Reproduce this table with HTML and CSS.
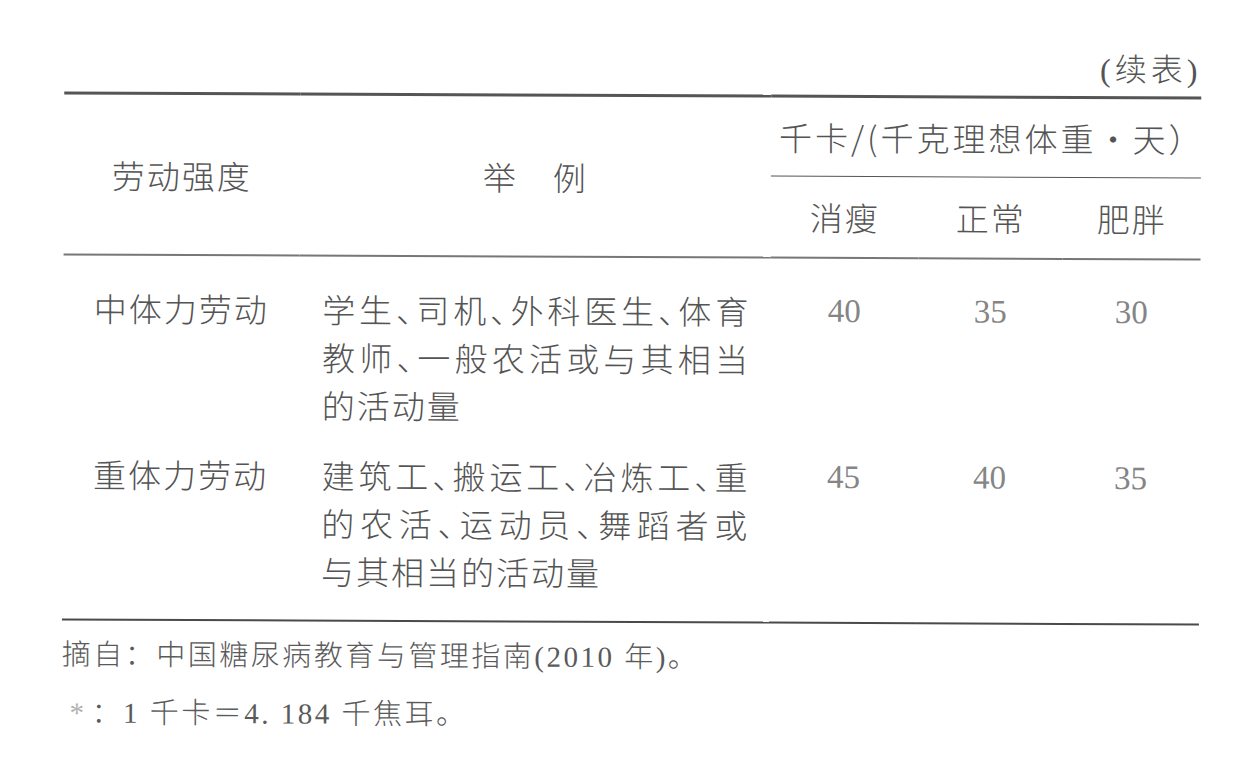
FILE: index.html
```html
<!DOCTYPE html>
<html lang="zh-CN">
<head>
<meta charset="utf-8">
<title>续表</title>
<link rel="stylesheet" href="styles.css">
</head>
<body>
<div class="page">
  <p class="cont">(续表)</p>
  <table class="tbl">
    <colgroup>
      <col class="c1"><col class="c2"><col class="c3"><col class="c4"><col class="c5">
    </colgroup>
    <thead>
      <tr>
        <th rowspan="2" class="hd-span">劳动强度</th>
        <th rowspan="2" class="hd-span">举　例</th>
        <th colspan="3" class="hd-group">千卡/(千克理想体重・天）</th>
      </tr>
      <tr>
        <th class="hd-sub">消瘦</th>
        <th class="hd-sub">正常</th>
        <th class="hd-sub">肥胖</th>
      </tr>
    </thead>
    <tbody>
      <tr class="r1">
        <td class="name">中体力劳动</td>
        <td class="ex"><span class="ln">学生、司机、外科医生、体育</span><span class="ln">教师、一般农活或与其相当</span><span class="ln end">的活动量</span></td>
        <td class="num">40</td>
        <td class="num">35</td>
        <td class="num">30</td>
      </tr>
      <tr class="r2">
        <td class="name">重体力劳动</td>
        <td class="ex"><span class="ln">建筑工、搬运工、冶炼工、重</span><span class="ln">的农活、运动员、舞蹈者或</span><span class="ln end">与其相当的活动量</span></td>
        <td class="num">45</td>
        <td class="num">40</td>
        <td class="num">35</td>
      </tr>
    </tbody>
  </table>
  <p class="note note-src">摘自：中国糖尿病教育与管理指南(2010 年)。</p>
  <p class="note note-unit"><span class="star">*</span>：1 千卡＝4. 184 千焦耳。</p>
</div>
</body>
</html>
```

FILE: styles.css
```css
html, body {
  margin: 0;
  background: #ffffff;
}
body {
  color: #545454;
  font-family: "Noto Sans CJK SC", sans-serif;
}
.page {
  width: 1137px;
  padding: 48px 0 0 63px;
  transform: rotate(0.25deg);
  transform-origin: 631px 380px;
}
.cont {
  margin: 0 0 6px;
  line-height: 40px;
  text-align: right;
  font-family: "Liberation Serif", "Noto Sans CJK SC", serif;
  font-size: 32px;
  font-weight: 300;
  letter-spacing: 4px;
}
.tbl {
  width: 1137px;
  border-collapse: separate;
  border-spacing: 0;
  table-layout: fixed;
}
.c1 { width: 236px; }
.c2 { width: 471px; }
.c3 { width: 148px; }
.c4 { width: 144px; }
.c5 { width: 138px; }
th {
  padding: 0;
  font-size: 33px;
  font-weight: 300;
  letter-spacing: 2px;
  text-align: center;
}
.hd-span {
  border-top: 3px solid #555;
  border-bottom: 2px solid #777;
  vertical-align: middle;
}
.hd-group {
  border-top: 3px solid #555;
  border-bottom: 1px solid #555;
  line-height: 78px;
  letter-spacing: 3px;
  padding-left: 8px;
}
.hd-sub {
  line-height: 80px;
  border-bottom: 2px solid #777;
}
td {
  padding: 0;
  vertical-align: top;
  line-height: 48px;
  font-size: 33px;
  font-weight: 300;
  letter-spacing: 2px;
}
.r1 td {
  padding-top: 28px;
}
.r2 td {
  padding-top: 22px;
  padding-bottom: 25px;
  border-bottom: 2px solid #4a4a4a;
}
.name {
  text-align: center;
}
.ex {
  padding-left: 23px;
}
.ln {
  display: block;
  width: 428px;
  text-align: justify;
  text-align-last: justify;
  font-feature-settings: "halt";
}
.ln.end {
  text-align-last: left;
}
.num {
  text-align: center;
  font-family: "Liberation Serif", serif;
  font-weight: 400;
  letter-spacing: 0;
  color: #858585;
}
.note {
  margin: 0;
  font-family: "Liberation Serif", "Noto Sans CJK SC", serif;
  font-size: 29px;
  font-weight: 300;
  letter-spacing: 2.5px;
  line-height: 40px;
  color: #5a5a5a;
}
.note-src {
  margin-top: 14px;
}
.note-unit {
  margin-top: 18px;
}
.star {
  display: inline-block;
  width: 22px;
  padding-left: 8px;
  color: #b0b0b0;
}
```
